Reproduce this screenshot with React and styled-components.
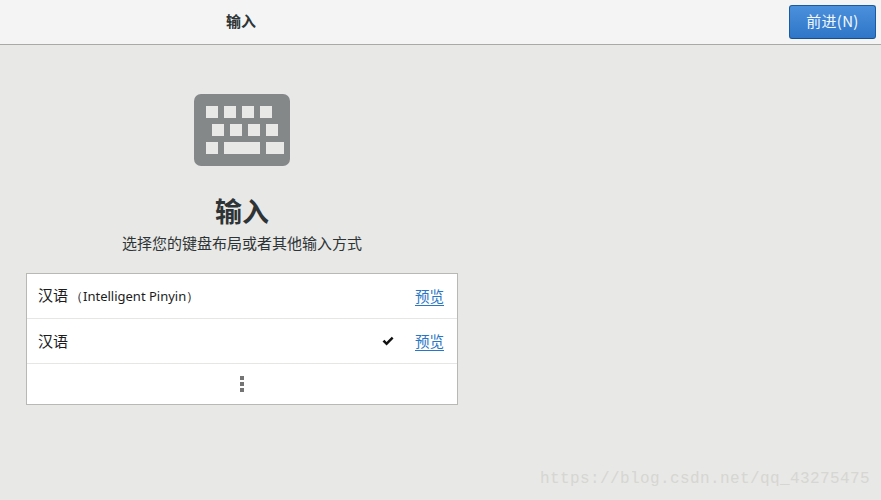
import React from 'react';
import styled, { createGlobalStyle } from 'styled-components';

const GlobalStyle = createGlobalStyle`
  html, body {
    margin: 0;
    padding: 0;
    background: #e8e8e6;
  }
  body {
    font-family: "Liberation Sans", "Noto Sans CJK SC", sans-serif;
  }
`;

const Page = styled.div`
  position: relative;
  width: 881px;
  height: 500px;
  overflow: hidden;
  display: flex;
  flex-direction: column;
  background: #e8e8e6;
`;

const Header = styled.header`
  height: 44px;
  flex: none;
  display: flex;
  align-items: flex-start;
  justify-content: space-between;
  padding-right: 5px;
  background: #f4f4f4;
  border-bottom: 1px solid #a9a9a5;
`;

const HeaderTitle = styled.div`
  width: 482px;
  height: 42px;
  line-height: 42px;
  text-align: center;
  font-family: "Noto Sans CJK SC", sans-serif;
  font-size: 15px;
  font-weight: 700;
  color: #2e3436;
`;

const NextButton = styled.button`
  width: 87px;
  height: 34px;
  margin-top: 5px;
  padding: 0 0 4px;
  border: 1px solid #1b5a9e;
  border-bottom-color: #174f8c;
  border-radius: 3px;
  background: linear-gradient(#4a90dc, #2f76c8);
  color: #f4f8fc;
  font-family: "Noto Sans CJK SC", sans-serif;
  font-size: 15px;
  letter-spacing: 0.3px;
`;

const Panel = styled.main`
  width: 432px;
  margin-left: 26px;
  padding-top: 49px;
  display: flex;
  flex-direction: column;
  align-items: center;
`;

const Keyboard = styled.div`
  width: 96px;
  height: 72px;
  box-sizing: border-box;
  padding: 12px;
  display: flex;
  flex-direction: column;
  gap: 6px;
  border-radius: 7px;
  background: #858888;
`;

const KeyRow = styled.div`
  display: flex;
  gap: 6px;
  padding-left: ${(p) => (p.$indent ? '6px' : '0')};
`;

const Key = styled.span`
  display: block;
  flex: none;
  width: ${(p) => p.$w || 12}px;
  height: 12px;
  background: #e8e8e6;
`;

const Title = styled.h1`
  margin: 27px 0 0;
  height: 36px;
  line-height: 36px;
  font-family: "Noto Sans CJK SC", sans-serif;
  font-size: 27px;
  font-weight: 700;
  color: #2e3436;
`;

const Subtitle = styled.p`
  margin: 4px 0 0;
  height: 20px;
  line-height: 20px;
  font-family: "Noto Sans CJK SC", sans-serif;
  font-size: 15px;
  color: #2e3436;
`;

const List = styled.div`
  width: 100%;
  box-sizing: border-box;
  margin-top: 20px;
  background: #fff;
  border: 1px solid #b8b8b4;
`;

const Row = styled.div`
  height: 45px;
  box-sizing: border-box;
  padding: 0 13px 2px 11px;
  display: flex;
  align-items: center;
  font-family: "Noto Sans CJK SC", sans-serif;
  font-size: 15px;
  color: #1c1c1c;
  border-bottom: 1px solid #e6e6e4;
`;

const RowLabel = styled.span`
  flex: 1;
`;

const Latin = styled.span`
  padding-left: 2px;
  font-family: "Noto Sans", sans-serif;
  font-size: 13px;
`;

const Check = styled.svg`
  width: 12px;
  height: 10px;
  margin: 2px 21px 0 0;
`;

const PreviewLink = styled.a`
  color: #2a76c6;
  font-size: 14.5px;
  text-decoration: underline;
  text-underline-offset: 3px;
`;

const MoreRow = styled.div`
  height: 40px;
  display: flex;
  flex-direction: column;
  align-items: center;
  justify-content: center;
  gap: 2px;
`;

const Dot = styled.span`
  display: block;
  width: 4px;
  height: 4px;
  background: #747474;
`;

const Watermark = styled.div`
  position: absolute;
  left: 540px;
  top: 470px;
  font-family: "Liberation Mono", monospace;
  font-size: 16px;
  letter-spacing: 0.4px;
  color: #d6d6d2;
  white-space: nowrap;
`;

const rows = [
  { id: 1, label: <>汉语<Latin>（Intelligent Pinyin）</Latin></> },
  { id: 2, label: '汉语', checked: true },
];

export default function App() {
  return (
    <Page>
      <GlobalStyle />
      <Header>
        <HeaderTitle>输入</HeaderTitle>
        <NextButton>前进(N)</NextButton>
      </Header>
      <Panel>
        <Keyboard>
          <KeyRow>
            <Key /><Key /><Key /><Key />
          </KeyRow>
          <KeyRow $indent>
            <Key /><Key /><Key /><Key />
          </KeyRow>
          <KeyRow>
            <Key /><Key $w={36} /><Key $w={18} />
          </KeyRow>
        </Keyboard>
        <Title>输入</Title>
        <Subtitle>选择您的键盘布局或者其他输入方式</Subtitle>
        <List>
          {rows.map((row) => (
            <Row key={row.id}>
              <RowLabel>{row.label}</RowLabel>
              {row.checked && (
                <Check viewBox="0 0 12 10">
                  <path d="M0.5 5.5 L2.5 3.8 L4.5 6 L9.8 0.8 L11.5 2.4 L4.6 9.5 Z" fill="#111" />
                </Check>
              )}
              <PreviewLink>预览</PreviewLink>
            </Row>
          ))}
          <MoreRow>
            <Dot /><Dot /><Dot />
          </MoreRow>
        </List>
      </Panel>
      <Watermark>https://blog.csdn.net/qq_43275475</Watermark>
    </Page>
  );
}
